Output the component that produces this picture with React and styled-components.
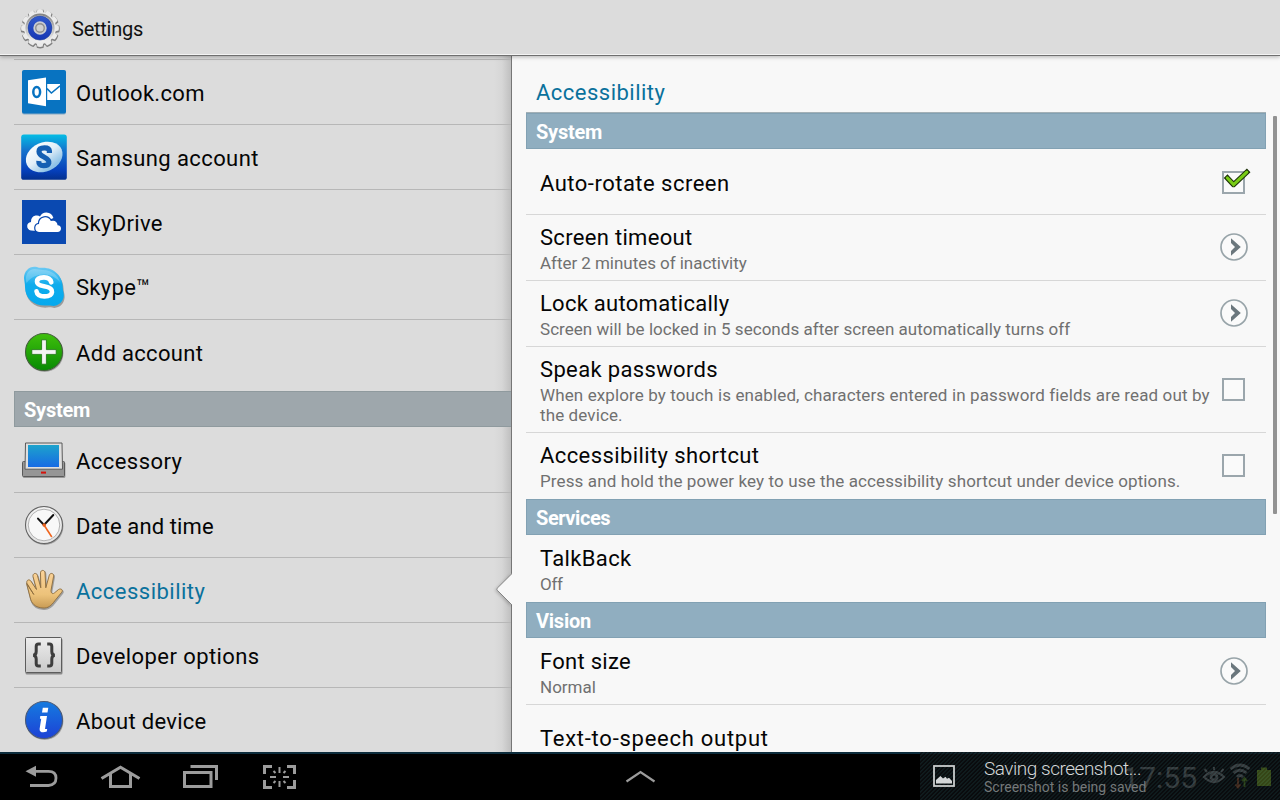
import React from "react";
import styled, { createGlobalStyle } from "styled-components";

const GlobalStyle = createGlobalStyle`
  * { box-sizing: border-box; }
  body { margin: 0; background: #000; font-family: Roboto, "Noto Sans", sans-serif; }
`;

const Screen = styled.div`
  width: 1280px;
  height: 800px;
  overflow: hidden;
  display: flex;
  flex-direction: column;
  background: #dcdcdc;
`;

const Header = styled.header`
  position: relative;
  z-index: 3;
  flex: none;
  height: 56px;
  display: flex;
  align-items: center;
  gap: 12px;
  padding: 2px 0 0 20px;
  background: #dcdcdc;
  border-bottom: 1px solid #6f6f6f;
  box-shadow: inset 0 -1px 0 #f4f4f4, 0 1px 4px rgba(0, 0, 0, 0.28);
`;

const HeaderTitle = styled.h1`
  margin: 0;
  font-size: 20px;
  line-height: 24px;
  font-weight: 400;
  letter-spacing: -0.25px;
  color: #111;
`;

const Body = styled.div`
  flex: 1;
  min-height: 0;
  display: flex;
`;

const Sidebar = styled.nav`
  width: 512px;
  flex: none;
  padding: 3px 1px 0 14px;
  overflow: hidden;
  background: linear-gradient(to right, #dcdcdc 494px, #d6d6d6 502px, #bfbfbf 511px, #767676 511px);
`;

const SidebarRow = styled.div`
  position: relative;
  height: 65px;
  display: flex;
  align-items: center;
  gap: 10px;
  padding-left: 6px;
  border-bottom: 1px solid ${(p) => (p.$last ? "transparent" : "#b7b7b7")};
`;

const SidebarTop = styled.div`
  height: 1px;
  background: #b7b7b7;
`;

const IconSlot = styled.div`
  width: 48px;
  height: 48px;
  flex: none;
  svg { display: block; overflow: visible; }
`;

const SidebarLabel = styled.span`
  margin-left: -2px;
  padding-top: ${(p) => (p.$raised ? 2 : 4)}px;
  font-size: 22px;
  line-height: 28px;
  letter-spacing: ${(p) => p.$track ?? 0.35}px;
  color: ${(p) => (p.$active ? "#0a719c" : "#050505")};
`;

const SectionBar = styled.div`
  height: 36px;
  display: flex;
  align-items: center;
  padding: 1px 0 0 9px;
  font-size: 20px;
  font-weight: 700;
  color: #fff;
  letter-spacing: ${(p) => p.$track ?? -0.25}px;
  background: ${(p) => (p.$muted ? "#9ea7ac" : "#90aec0")};
  border: 1px solid ${(p) => (p.$muted ? "#8f9a9e" : "#82a1b3")};
  ${(p) => p.$muted && "border-right: 0; margin: 6px 0 1px;"}
`;

const Pointer = styled.svg`
  position: absolute;
  right: -1px;
  top: 15px;
  z-index: 2;
  filter: drop-shadow(-1px 1px 1.5px rgba(0, 0, 0, 0.2));
`;

const Detail = styled.main`
  position: relative;
  z-index: 1;
  flex: 1;
  padding: 0 14px;
  overflow: hidden;
  background: #f8f8f8;
`;

const DetailTitle = styled.h2`
  margin: 0;
  height: 57px;
  padding: 23px 0 0 10px;
  font-size: 22px;
  line-height: 28px;
  font-weight: 400;
  letter-spacing: 0.48px;
  color: #0a719c;
  border-bottom: 1px solid #a3b0b6;
`;

const Pref = styled.div`
  display: flex;
  align-items: center;
  height: ${(p) => p.$h ?? 66}px;
  padding: ${(p) => (p.$single ? 3 : 1)}px 0 0 14px;
  border-bottom: 1px solid ${(p) => (p.$last ? "transparent" : "#d7d7d7")};
`;

const PrefText = styled.div`
  flex: 1;
  min-width: 0;
`;

const PrefTitle = styled.div`
  font-size: 22px;
  line-height: 28px;
  padding-top: ${(p) => (p.$single && !p.$raised ? 2 : 0)}px;
  letter-spacing: ${(p) => p.$track ?? 0.35}px;
  color: #050505;
`;

const PrefSummary = styled.div`
  padding-top: 1px;
  margin-bottom: -1px;
  font-size: 17px;
  line-height: 20px;
  letter-spacing: ${(p) => p.$track ?? 0}px;
  color: #707070;
  white-space: pre;
`;

const Widget = styled.div`
  width: 28px;
  height: 28px;
  margin: 0 18px ${(p) => p.$lift ?? 0}px 0;
  flex: none;
  svg { display: block; overflow: visible; }
`;

const ScrollThumb = styled.div`
  position: absolute;
  right: 3px;
  top: 60px;
  width: 4px;
  height: 398px;
  border-radius: 1px;
  background: #929292;
`;

const NavBar = styled.footer`
  position: relative;
  z-index: 4;
  flex: none;
  height: 48px;
  display: flex;
  align-items: center;
  background: #000;
  border-top: 2px solid #0c2c3c;
`;

const NavIcons = styled.div`
  display: flex;
  width: 610px;
  svg { display: block; }
`;

const StatusArea = styled.div`
  margin-left: auto;
  display: flex;
  align-items: center;
  padding-right: 4px;
`;

const Clock = styled.span`
  font-size: 30px;
  font-weight: 400;
  line-height: 46px;
  padding-top: 2px;
  color: #9a9e9f;
  margin-right: 3px;
`;

const Toast = styled.div`
  position: absolute;
  right: 0;
  top: -2px;
  width: 360px;
  height: 48px;
  display: flex;
  align-items: center;
  padding-left: 12px;
  background: repeating-linear-gradient(135deg, rgba(21, 38, 41, 0.74) 0 0.6px, rgba(13, 15, 18, 0.74) 1.2px 2.3px, rgba(21, 38, 41, 0.74) 2.83px);
`;

const ToastText = styled.div`
  margin-left: 28px;
  white-space: nowrap;
`;

const ToastTitle = styled.div`
  font-size: 19px;
  line-height: 21px;
  font-weight: 300;
  letter-spacing: -0.48px;
  color: #d4d7d8;
`;

const ToastSub = styled.div`
  padding-top: 1px;
  margin-bottom: -1px;
  font-size: 14px;
  line-height: 15px;
  color: #747879;
`;

function GearIcon() {
  const teeth = Array.from({ length: 12 }, (_, i) => i * 30);
  return (
    <svg width="40" height="42" viewBox="0 0 40 42">
      <defs>
        <linearGradient id="gb" x1="0" y1="0" x2="0" y2="1">
          <stop offset="0" stopColor="#3159cb" /><stop offset="1" stopColor="#1637b4" />
        </linearGradient>
        <linearGradient id="gr" x1="0" y1="0" x2="0" y2="1">
          <stop offset="0" stopColor="#858585" /><stop offset=".5" stopColor="#b9b9b9" /><stop offset="1" stopColor="#efefef" />
        </linearGradient>
      </defs>
      <g stroke="#808080" strokeWidth="1.6" fill="#808080" transform="translate(.2 .9)">
        {teeth.map((a) => (
          <path key={a} d="M16.4 6.5 L17.4 1.6 Q20 .9 22.6 1.6 L23.6 6.5Z" transform={`rotate(${a} 20 20)`} />
        ))}
        <circle cx="20" cy="20" r="15.6" />
      </g>
      <g fill="#ebebeb">
        {teeth.map((a) => (
          <path key={a} d="M16.2 7 L17.4 1.4 Q20 .7 22.6 1.4 L23.8 7Z" transform={`rotate(${a} 20 20)`} />
        ))}
        <circle cx="20" cy="20" r="16" />
      </g>
      <circle cx="20" cy="20" r="13.6" fill="#dedede" stroke="url(#gr)" strokeWidth="2" />
      <circle cx="20" cy="20" r="12" fill="url(#gb)" stroke="#24419b" strokeWidth=".6" />
      <circle cx="20" cy="20" r="5.8" fill="#aaa" stroke="#c9ccd2" strokeWidth="1.8" />
      <circle cx="20" cy="20" r="4.2" fill="#d0d0d0" stroke="#8c8c8c" strokeWidth="1.2" />
    </svg>
  );
}

const Svg48 = ({ children }) => <svg width="48" height="48" viewBox="0 0 48 48">{children}</svg>;

function OutlookIcon() {
  return (
    <Svg48>
      <rect x="2" y="2.6" width="44" height="43.8" rx="2" fill="#075f9f" opacity=".4" />
      <rect x="2" y="2" width="44" height="43.6" rx="2" fill="#0873c1" />
      <path d="M8 12.2 L26 9.6 V38.3 L8 35.2Z" fill="#fff" />
      <ellipse cx="16.7" cy="24" rx="3.4" ry="4.9" fill="none" stroke="#0873c1" strokeWidth="2.5" />
      <rect x="27.2" y="16" width="12.8" height="16" fill="#fff" />
      <path d="M27 20.6 L31.4 25 L40 17.8" fill="none" stroke="#0873c1" strokeWidth="1.5" />
    </Svg48>
  );
}

function SamsungIcon() {
  return (
    <Svg48>
      <defs>
        <linearGradient id="sa" x1="0" y1="0" x2="0" y2="1">
          <stop offset="0" stopColor="#05bce4" /><stop offset=".35" stopColor="#1573cd" />
          <stop offset=".8" stopColor="#053fba" /><stop offset="1" stopColor="#04308d" />
        </linearGradient>
        <linearGradient id="sb" x1="0" y1="0" x2=".3" y2="1">
          <stop offset="0" stopColor="#fff" /><stop offset=".55" stopColor="#e2eff8" /><stop offset="1" stopColor="#8ec2e7" />
        </linearGradient>
      </defs>
      <rect x="1.2" y="1.6" width="45.6" height="45.2" rx="2.6" fill="url(#sa)" />
      <ellipse cx="24.2" cy="24" rx="19" ry="14.5" fill="url(#sb)" transform="rotate(-24 24.2 24)" />
      <path d="M29.4 20 V18 Q29.2 14.8 24.5 14.8 Q19 14.8 19 18.5 Q19 21.5 24 24 Q29.5 26.8 28.8 30 Q28 32.8 23.5 32.7 Q18.5 32.6 18.8 28" fill="none" stroke="#145fb3" strokeWidth="5.2" />
    </Svg48>
  );
}

function SkyDriveIcon() {
  return (
    <Svg48>
      <rect x="2" y="2" width="44" height="44" fill="#0a49b1" />
      <path d="M11 32.5 Q7 31.5 7.2 27.7 Q7.5 24.5 11 24 Q10.8 18.7 15.6 17.6 Q18.2 17 20 18.5 Q22 14.3 26.5 14.4 Q32 14.7 33.4 20 L25 24 L17 33Z" fill="#fff" />
      <path d="M19 34 Q15.3 33.5 15.3 29.8 Q15.5 26.3 19 26 Q18.8 20.5 24 19.4 Q28.7 18.7 30.8 23 Q36.7 21.4 37.6 27.3 Q41 27.5 41 30.8 Q40.8 33.8 37.5 34Z" fill="#fff" stroke="#0a49b1" strokeWidth="2.4" paintOrder="stroke" />
    </Svg48>
  );
}

function SkypeIcon() {
  return (
    <Svg48>
      <defs>
        <linearGradient id="sk" x1="0" y1="0" x2="0" y2="1">
          <stop offset="0" stopColor="#6fcaf3" /><stop offset=".45" stopColor="#10acec" /><stop offset="1" stopColor="#04a9ee" />
        </linearGradient>
      </defs>
      <path d="M4.3 15 C4 8 9.5 3.8 15.5 4.6 C18 5 19 6 20.5 5.8 C33 4 43 13 43 25 C43 28.5 44.2 29.5 44 33.5 C43.5 40.5 37.5 45 31.5 43.5 C29.5 43 28.5 43.3 26.5 43.5 C14 44.3 5 36.5 5 24.5 C5 20 4.4 18 4.3 15Z" fill="#666" opacity=".55" transform="translate(.6 1.1)" />
      <path d="M4 15 C4 8 9.5 3 15.5 3.8 C18 4.2 19 5 20.5 4.8 C33 3.5 42.8 12.5 42.8 24.5 C42.8 28 44 29 43.8 33 C43.3 39.5 37 43.8 31.5 42.8 C29.5 42.3 28.5 42.3 26.5 42.5 C14 43.3 5 35.5 5 24 C5 20 4.2 18 4 15Z" fill="url(#sk)" />
      <path d="M6.5 20 C4 12 9 5.7 15 6 C19 6.2 20 7 23 7 C32 7.5 38 12 40 19 C31 9 15 9 6.5 20Z" fill="#fff" opacity=".22" />
      <path d="M31.3 19.3 Q30 14.4 24 14.4 Q17 14.5 17 18.7 Q17 22 24 23.2 Q32.5 24.5 32 29 Q31.5 33.4 24.5 33.4 Q17.2 33.3 16.5 28.2" fill="none" stroke="#fff" strokeWidth="4.6" strokeLinecap="round" />
    </Svg48>
  );
}

const Disc = ({ id, top, bottom, edge, children }) => (
  <Svg48>
    <defs>
      <linearGradient id={id} x1="0" y1="0" x2="0" y2="1">
        <stop offset="0" stopColor={top} /><stop offset="1" stopColor={bottom} />
      </linearGradient>
    </defs>
    <circle cx="24.6" cy="25.2" r="18.8" fill="#777" opacity=".6" />
    <circle cx="24" cy="24" r="18.5" fill={`url(#${id})`} stroke={edge} strokeWidth="1.1" />
    {children}
  </Svg48>
);

function AddIcon() {
  return (
    <Disc id="ad" top="#3fc00c" bottom="#078a03" edge="#42603a">
      <path d="M21.6 11.8 H26.4 V21.6 H36.2 V26.4 H26.4 V36.2 H21.6 V26.4 H11.8 V21.6 H21.6Z" fill="#f4f4f4" stroke="#18720c" strokeWidth=".8" />
    </Disc>
  );
}

function AccessoryIcon() {
  return (
    <Svg48>
      <defs>
        <linearGradient id="ac" x1="0" y1="0" x2="0" y2="1">
          <stop offset="0" stopColor="#1da3cc" /><stop offset="1" stopColor="#176be4" />
        </linearGradient>
      </defs>
      <rect x="2.8" y="26" width="42.6" height="16" rx="1.5" fill="#555" opacity=".5" />
      <rect x="2.5" y="25.5" width="42" height="15" rx="1" fill="#969696" stroke="#5a5a5a" />
      <path d="M5.5 7 H42 L42.5 33.2 H5Z" fill="#dfdfdf" stroke="#5a5a5a" />
      <rect x="8" y="9" width="31" height="22" fill="url(#ac)" />
      <rect x="21" y="35.6" width="5" height="2" fill="#d5130c" />
    </Svg48>
  );
}

function ClockIcon() {
  return (
    <Disc id="ck" top="#f2f2f2" bottom="#e3e3e3" edge="#646464">
      <circle cx="24" cy="24" r="15.8" fill="#f8f8f8" stroke="#b2b2b2" />
      <path d="M18 17.6 L24 24 L33.3 14" fill="none" stroke="#111" strokeWidth="2" strokeLinecap="round" />
      <path d="M24 24 L31.8 36" stroke="#f0651d" strokeWidth="1.6" />
      <circle cx="24.2" cy="24" r="1.8" fill="#e8601c" />
    </Disc>
  );
}

function HandIcon() {
  const d = "M13.8 28.5 L7 17.5 C5.8 14.5 9 12.5 10.8 15 L16.5 23.5 L13 10.5 C12.5 7 16.5 6.3 17.4 9.3 L20.8 21.8 L20.5 6.8 C20.6 3.6 24.9 3.6 25 6.8 L25.8 21.8 L29.3 9.2 C30.3 6.3 34.1 7.2 33.6 10.2 L31 24.5 C31 27.5 32.7 28.3 34.3 27 L38.5 23.5 C41 22 43.5 24 41.7 26.3 L34.8 34.8 C31.5 39.5 28 42.5 23 42 C17 41.7 12.5 39 10.7 33.5 L6.6 17.5Z";
  return (
    <Svg48>
      <defs>
        <linearGradient id="hd" x1="0" y1="0" x2="0" y2="1">
          <stop offset="0" stopColor="#fbd39a" /><stop offset=".65" stopColor="#ecc27a" /><stop offset="1" stopColor="#c89b55" />
        </linearGradient>
      </defs>
      <path d={d} fill="#777" stroke="#777" strokeWidth="1.5" opacity=".6" transform="translate(.6 1.3)" />
      <path d={d} fill="url(#hd)" stroke="#8b6b3c" strokeWidth=".9" />
    </Svg48>
  );
}

function BracesIcon() {
  return (
    <Svg48>
      <defs>
        <linearGradient id="br" x1="0" y1="0" x2="0" y2="1">
          <stop offset="0" stopColor="#ededed" /><stop offset="1" stopColor="#c9c9c9" />
        </linearGradient>
      </defs>
      <rect x="5.5" y="7.5" width="37" height="36" rx="1.5" fill="#666" opacity=".7" />
      <rect x="5.5" y="6.5" width="36" height="35" rx="1" fill="url(#br)" stroke="#5c5c5c" />
      <path d="M20.8 13 H18.5 Q16.2 13 16.2 15.5 V20.5 Q16.2 24 13.2 24.2 Q16.2 24.5 16.2 28 V32.5 Q16.2 35.1 18.5 35.1 H20.8 M27.2 13 H29.5 Q31.8 13 31.8 15.5 V20.5 Q31.8 24 34.8 24.2 Q31.8 24.5 31.8 28 V32.5 Q31.8 35.1 29.5 35.1 H27.2" fill="none" stroke="#3d3d3d" strokeWidth="3" />
    </Svg48>
  );
}

function InfoIcon() {
  return (
    <Disc id="in" top="#157be0" bottom="#1d41d5" edge="#4a5a78">
      <path d="M22.8 11.8 H28.3 L27.5 16.4 H22Z M20.3 20 H27 L25 33 H27.2 L26.8 35.6 Q24 36.7 21.6 36.2 Q19.2 35.4 19.6 33 L21.2 22.8 H19.9Z" fill="#fff" />
    </Disc>
  );
}

function CheckBox({ checked }) {
  return (
    <Widget>
      <svg width="28" height="28" viewBox="0 0 28 28">
        <rect x="3" y="3" width="21" height="21" fill="#fafafa" stroke="#9ba6ac" strokeWidth="2" />
        {checked && (
          <g fill="none">
            <path d="M7.4 9 L13.6 15.6 L26.8 3.2" stroke="#1d3208" strokeWidth="5.2" strokeLinecap="square" strokeLinejoin="round" />
            <path d="M7.4 9 L13.6 15.6 L26.8 3.2" stroke="#78cc15" strokeWidth="3.2" strokeLinecap="round" />
          </g>
        )}
      </svg>
    </Widget>
  );
}

function Chevron() {
  return (
    <Widget $lift={2}>
      <svg width="28" height="28" viewBox="0 0 28 28">
        <circle cx="14" cy="14" r="13" fill="#fafafa" stroke="#98a4a9" strokeWidth="1.7" />
        <path d="M11 5.2 L20.8 14 L11 22.8 V18 L15 14 L11 10Z" fill="#6b777d" />
      </svg>
    </Widget>
  );
}

const accounts = [
  { label: "Outlook.com", icon: OutlookIcon, track: 0.33 },
  { label: "Samsung account", icon: SamsungIcon, track: 0.4 },
  { label: "SkyDrive", icon: SkyDriveIcon, track: 0.35 },
  { label: "Skype™", icon: SkypeIcon, track: 0.3, raised: true },
  { label: "Add account", icon: AddIcon, track: 0.33, last: true },
];

const system = [
  { label: "Accessory", icon: AccessoryIcon, track: 0.45 },
  { label: "Date and time", icon: ClockIcon, track: 0.12 },
  { label: "Accessibility", icon: HandIcon, track: 0.48, active: true },
  { label: "Developer options", icon: BracesIcon, track: 0.42 },
  { label: "About device", icon: InfoIcon, track: 0.28 },
];

function SidebarItem({ item }) {
  const Icon = item.icon;
  return (
    <SidebarRow $last={item.last}>
      <IconSlot><Icon /></IconSlot>
      <SidebarLabel $active={item.active} $track={item.track} $raised={item.raised}>{item.label}</SidebarLabel>
      {item.active && (
        <Pointer width="16" height="33" viewBox="0 0 16 33">
          <path d="M16 .5 L1.2 15.2 Q.4 16.2 1.2 17.2 L16 32" fill="#f8f8f8" stroke="#858585" />
        </Pointer>
      )}
    </SidebarRow>
  );
}

function Preference({ title, summary, children, h, last, track, subTrack, raised }) {
  return (
    <Pref $h={h} $last={last} $single={!summary}>
      <PrefText>
        <PrefTitle $track={track} $single={!summary} $raised={raised}>{title}</PrefTitle>
        {summary && <PrefSummary $track={subTrack}>{summary}</PrefSummary>}
      </PrefText>
      {children}
    </Pref>
  );
}

function NavGlyphs() {
  return (
    <NavIcons>
      <svg width="320" height="46" viewBox="0 754 320 46" fill="none" stroke="#9c9c9c">
        <path d="M30 785.5 H48.5 Q56 785 56 778 Q56 771.3 48.5 771.3 H34" strokeWidth="2.8" />
        <path d="M25.5 771.3 L36 765.8 V776.8Z" fill="#9c9c9c" stroke="none" />
        <path d="M101.5 778.5 L120.5 767.2 L139.5 778.5 M110.5 774 V786.5 H130.5 V774" strokeWidth="3" />
        <path d="M184.5 772.5 H211 V786.5 H184.5Z M190.5 766.5 H216.5 V780" strokeWidth="3" />
        <path d="M264.5 774 V766.5 H272 M287 766.5 H294.5 V774 M294.5 780 V787.5 H287 M272 787.5 H264.5 V780" strokeWidth="3" />
        <path d="M279.5 767 V773 M279.5 781 V787 M270 777 H276 M283 777 H289" strokeWidth="2" />
        <path d="M273.5 771 L275.5 773 M285.5 771 L283.5 773 M273.5 783 L275.5 781 M285.5 783 L283.5 781" strokeWidth="2" />
      </svg>
    </NavIcons>
  );
}

export default function App() {
  return (
    <Screen>
      <GlobalStyle />
      <Header>
        <GearIcon />
        <HeaderTitle>Settings</HeaderTitle>
      </Header>
      <Body>
        <Sidebar>
          <SidebarTop />
          {accounts.map((it, i) => <SidebarItem key={i} item={it} />)}
          <SectionBar $muted>System</SectionBar>
          {system.map((it, i) => <SidebarItem key={i} item={it} />)}
        </Sidebar>
        <Detail>
          <DetailTitle>Accessibility</DetailTitle>
          <SectionBar>System</SectionBar>
          <Preference track={0.49} title="Auto-rotate screen"><CheckBox checked /></Preference>
          <Preference track={0.31} subTrack={-0.04} title="Screen timeout" summary="After 2 minutes of inactivity"><Chevron /></Preference>
          <Preference track={0.27} subTrack={0.035} title="Lock automatically" summary="Screen will be locked in 5 seconds after screen automatically turns off"><Chevron /></Preference>
          <Preference h={86} track={0.35} subTrack={0.115} title="Speak passwords" summary={"When explore by touch is enabled, characters entered in password fields are read out by\nthe device."}><CheckBox /></Preference>
          <Preference last track={0.4} subTrack={0.113} title="Accessibility shortcut" summary="Press and hold the power key to use the accessibility shortcut under device options."><CheckBox /></Preference>
          <SectionBar $track={-0.42}>Services</SectionBar>
          <Preference h={67} last track={0.35} subTrack={-0.3} title="TalkBack" summary="Off" />
          <SectionBar>Vision</SectionBar>
          <Preference h={67} track={0.27} title="Font size" summary="Normal"><Chevron /></Preference>
          <Preference last raised track={0.74} title="Text-to-speech output" />
          <ScrollThumb />
        </Detail>
      </Body>
      <NavBar>
        <NavGlyphs />
        <svg width="60" height="46" viewBox="610 754 60 46">
          <path d="M626.5 781.5 L640.5 772 L654.5 781.5" fill="none" stroke="#9c9c9c" strokeWidth="2.2" />
        </svg>
        <StatusArea>
          <Clock>17:55</Clock>
          <svg width="76" height="46" viewBox="1200 754 76 46" fill="none" stroke="#a3a7a8">
            <path d="M1204 777 Q1214 767 1224 777 Q1214 787 1204 777Z" strokeWidth="2.2" />
            <circle cx="1214" cy="777" r="3" strokeWidth="2.8" />
            <path d="M1214 770 V767 M1207 772 L1204.5 769 M1221 772 L1223.5 769" strokeWidth="2" />
            <path d="M1230.5 769 Q1240 761 1249.5 769 M1233.5 773 Q1240 767.5 1246.5 773 M1237 777 Q1240 774 1243 777" strokeWidth="2.8" />
            <path d="M1238 778 V787 M1235.5 784.5 L1238 787.5 L1240.5 784.5" stroke="#d8652c" strokeWidth="1.8" />
            <path d="M1244.5 787 V778 M1242 781 L1244.5 778 L1247 781" stroke="#7bc020" strokeWidth="1.8" />
            <path d="M1257 770 H1261 V767.5 H1267 V770 H1271 V786 H1257Z" fill="#a8e020" stroke="none" />
          </svg>
        </StatusArea>
        <Toast>
          <svg width="24" height="24" viewBox="0 0 24 24">
            <rect x="2" y="2" width="20" height="20" fill="none" stroke="#c9cccd" strokeWidth="1.8" />
            <path d="M4 19.5 V16 L8.5 12 L11 14.5 L13.5 12.7 L15 14.7 L17 13.7 L20 17 V19.5Z" fill="#d4d7d8" />
          </svg>
          <ToastText>
            <ToastTitle>Saving screenshot...</ToastTitle>
            <ToastSub>Screenshot is being saved</ToastSub>
          </ToastText>
        </Toast>
      </NavBar>
    </Screen>
  );
}
